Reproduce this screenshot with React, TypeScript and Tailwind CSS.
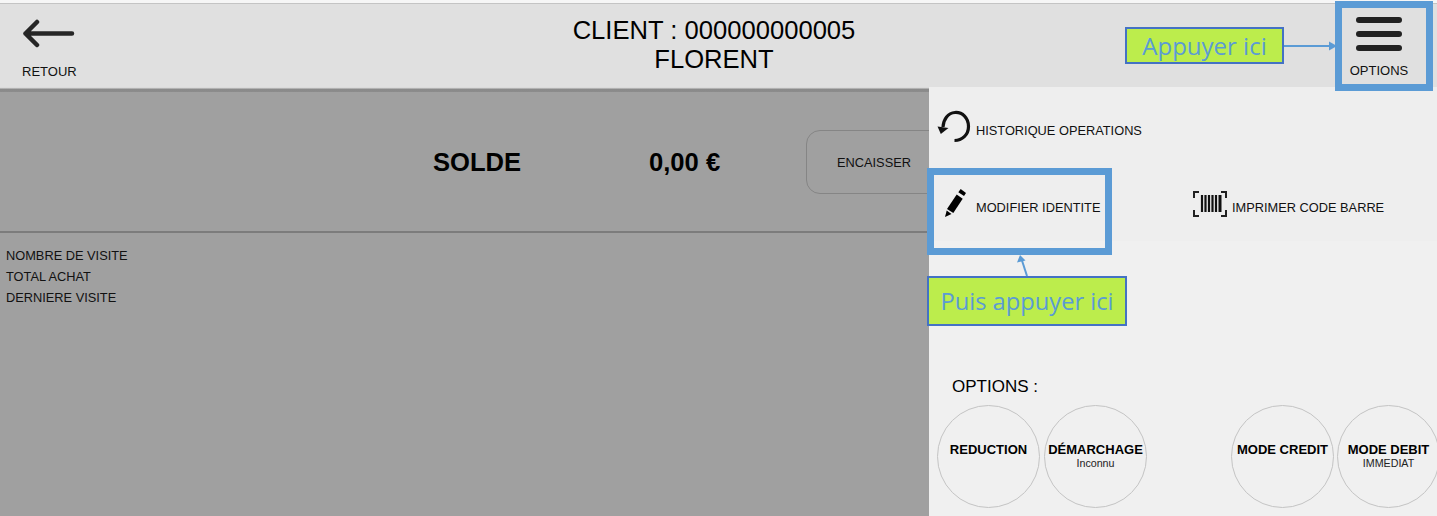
const font = { fontFamily: '"Liberation Sans", Arial, sans-serif' };
const noteFont = { fontFamily: '"Open Sans", "Noto Sans", sans-serif' };

const RoundOption = ({ title, sub, className }: { title: string; sub?: string; className?: string }) => {
  return (
    <div className={"w-[103px] h-[103px] shrink-0 rounded-full border border-[#c4c4c4] flex flex-col items-center pt-[36px] " + (className || "")}>
      <p className="text-[13px] leading-[15px] font-bold text-black whitespace-nowrap">{title}</p>
      {sub && <p className="text-[10.7px] leading-[12px] text-[#222] whitespace-nowrap">{sub}</p>}
    </div>
  );
};

const Barcode = () => (
  <svg width="34" height="26" viewBox="0 0 34 26" className="shrink-0" fill="none">
    <path d="M6 1H1V7M28 1H33V7M6 25H1V19M28 25H33V19" stroke="#222" strokeWidth="2" />
    <path d="M9 4V21M12.5 4V21M16 4V21M19.5 4V21M23 4V21" stroke="#111" strokeWidth="2.2" />
    <path d="M27 4V21" stroke="#111" strokeWidth="3" />
  </svg>
);

export default function App() {
  return (
    <div style={font} className="relative w-[1437px] h-[516px] overflow-hidden bg-[#a0a0a0] flex flex-col">
      <div className="h-[3px] bg-[#f6f6f6]" />
      <div className="h-[1px] bg-[#c4c4c4]" />

      <header className="h-[83px] shrink-0 bg-[#e0e0e0] flex items-start relative">
        <div className="w-[98px] flex flex-col items-start pl-[22px] pt-[15px]">
          <svg width="54" height="30" viewBox="0 0 54 30" fill="none">
            <path d="M50 14.5H3.5M15 3L3.5 14.5L15 26" stroke="#262626" strokeWidth="4.5" strokeLinecap="round" strokeLinejoin="round" />
          </svg>
          <span className="text-[13px] leading-[15px] text-[#111] mt-[15px]">RETOUR</span>
        </div>
        <div className="flex-1 text-center text-[25.6px] leading-[29px] text-black pt-[12px]">
          <p>CLIENT : 000000000005</p>
          <p>FLORENT</p>
        </div>
        <div className="w-[98px] mr-[9px] flex flex-col items-center pt-[13px]">
          <div className="flex flex-col gap-[8px] w-[46px]">
            <div className="h-[6px] rounded-full bg-[#222]" />
            <div className="h-[6px] rounded-full bg-[#222]" />
            <div className="h-[6px] rounded-full bg-[#222]" />
          </div>
          <span className="text-[13px] leading-[15px] text-[#111] mt-[12px]">OPTIONS</span>
        </div>
      </header>

      <div className="flex-1 flex min-h-0">
        <main className="w-[929px] shrink-0 flex flex-col overflow-hidden">
          <div className="h-[5px] bg-gradient-to-b from-[#f0f0f0] via-[#8a8a8a] to-[#8c8c8c]" />
          <div className="h-[141px] border-b-2 border-[#7c7c7c] flex items-center pt-[1px]">
            <span className="w-[433px] shrink-0" />
            <b className="w-[216px] shrink-0 text-[25.6px] text-black">SOLDE</b>
            <b className="w-[157px] shrink-0 text-[25.6px] text-black">0,00 €</b>
            <div className="w-[160px] h-[64px] shrink-0 rounded-[14px] border border-[#858585] text-[12.8px] text-[#111] pl-[30px] pt-[1px] flex items-center">
              ENCAISSER
            </div>
          </div>
          <div className="pl-[6px] pt-[12px] text-[12.8px] leading-[21px] text-[#111]">
            <p>NOMBRE DE VISITE</p>
            <p>TOTAL ACHAT</p>
            <p>DERNIERE VISITE</p>
          </div>
        </main>

        <aside className="flex-1 bg-[#f0f0f0] flex flex-col">
          <div className="h-[154px] bg-[#eeeeee] pl-[8px]">
            <div className="h-[76px] pt-[23px] flex items-start">
              <svg width="34" height="34" viewBox="0 0 34 34" className="shrink-0" fill="none">
                <path d="M6 17C6.5 9 11 3 18 2.5C25.5 2 31.5 8 31.5 16.5C31.5 25 25 30.5 17.5 30.5" stroke="#111" strokeWidth="3.2" />
                <path d="M0.5 16.5L11.5 18L3.8 24Z" fill="#111" />
              </svg>
              <span className="text-[12.8px] leading-[15px] text-[#111] ml-[5px] mt-[13px]">HISTORIQUE OPERATIONS</span>
            </div>
            <div className="flex items-start">
              <div className="w-[256px] shrink-0 flex items-start pl-[8px] pt-[26px]">
                <svg width="23" height="28" viewBox="0 0 23 28" className="shrink-0" fill="#000">
                  <path d="M15.7 0L21 4L19 7L13.3 3.2Z" />
                  <path d="M11.7 5.5L17.7 9.8L8.3 24L2 20Z" />
                  <path d="M1.7 21.5L6.5 25L0 28Z" />
                </svg>
                <span className="text-[12.8px] leading-[15px] text-[#111] ml-[8px] mt-[11px]">MODIFIER IDENTITE</span>
              </div>
              <div className="flex items-start pt-[28px]">
                <Barcode />
                <span className="text-[12.8px] leading-[15px] text-[#111] ml-[5px] mt-[9px] whitespace-nowrap">IMPRIMER CODE BARRE</span>
              </div>
            </div>
          </div>

          <p className="text-[17px] leading-[18px] text-black ml-[23px] mt-[137px]">OPTIONS :</p>
          <div className="flex mt-[9px] pl-[8px] w-[520px]">
            <RoundOption title="REDUCTION" />
            <RoundOption title="DÉMARCHAGE" sub="Inconnu" className="ml-[4px]" />
            <RoundOption title="MODE CREDIT" className="ml-[84px]" />
            <RoundOption title="MODE DEBIT" sub="IMMEDIAT" className="ml-[3px]" />
          </div>
        </aside>
      </div>

      {/* annotations posees sur la capture */}
      <div className="absolute left-[1125px] top-[27px] w-[159px] h-[37px] bg-[#bced4c] border-2 border-[#4472c4] text-[#5b9bd5] flex items-center justify-center pt-[1px]" style={noteFont}>
        <span className="text-[24px] leading-none">Appuyer ici</span>
      </div>
      <div className="absolute left-[1335px] top-[1px] w-[98px] h-[90px] border-[7px] border-[#5b9bd5]" />
      <div className="absolute left-[927px] top-[168px] w-[185px] h-[87px] border-[7px] border-[#5b9bd5]" />
      <div className="absolute left-[927px] top-[276px] w-[200px] h-[50px] bg-[#bced4c] border-2 border-[#4472c4] text-[#5b9bd5] flex items-center justify-center pt-[1px]" style={noteFont}>
        <span className="text-[23.7px] leading-none">Puis appuyer ici</span>
      </div>
      <svg className="absolute left-[1280px] top-[36px]" width="60" height="20" viewBox="0 0 60 20" fill="none">
        <path d="M4 10H52" stroke="#5b9bd5" strokeWidth="2" />
        <path d="M49 5.5L57 10L49 14.5Z" fill="#5b9bd5" />
      </svg>
      <svg className="absolute left-[1012px] top-[254px]" width="20" height="24" viewBox="0 0 20 24" fill="none">
        <path d="M15 22L9.5 5" stroke="#5b9bd5" strokeWidth="2" />
        <path d="M5 8.5L8 1L13.5 6.5Z" fill="#5b9bd5" />
      </svg>
    </div>
  );
}
